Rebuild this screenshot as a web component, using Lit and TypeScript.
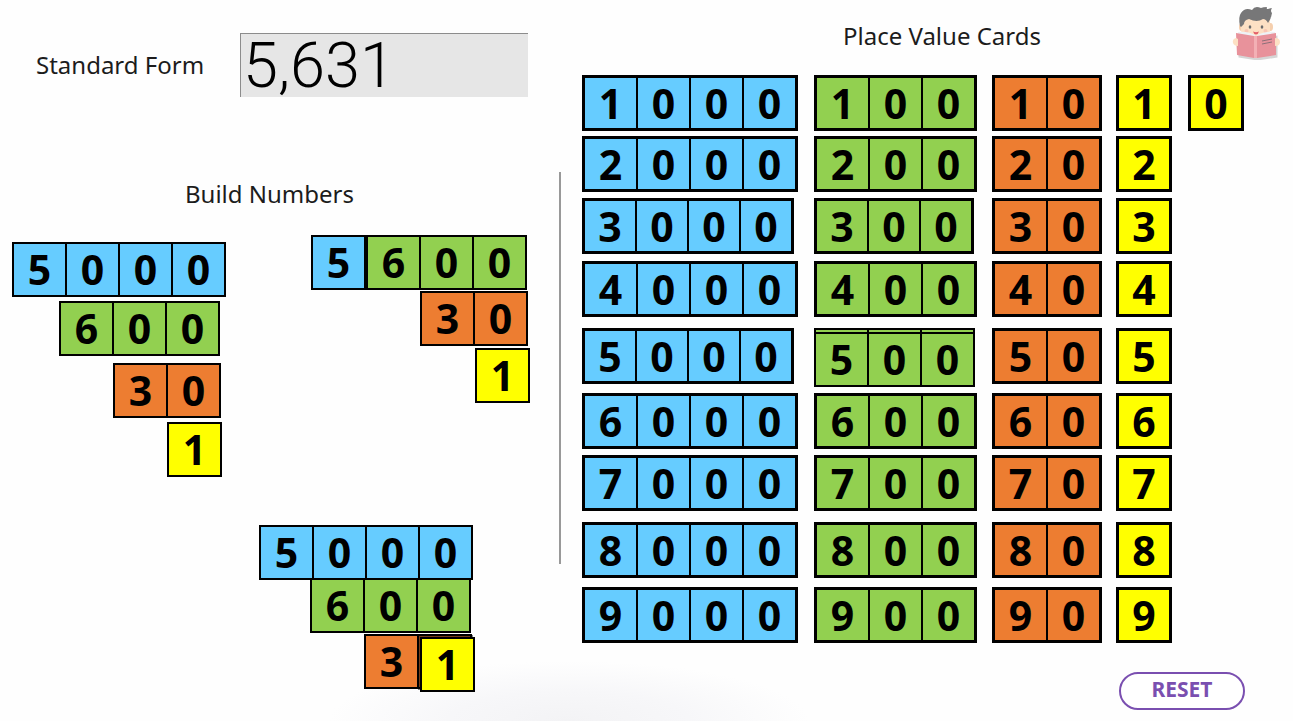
import { LitElement, html, css } from "lit";
import { customElement, property, state } from "lit/decorators.js";
import { classMap } from "lit/directives/class-map.js";
import { styleMap } from "lit/directives/style-map.js";

interface Placed {
  value: string;
  x: number;
  y: number;
  lifted?: boolean;
}

const INITIAL: Placed[] = [
  { value: "5000", x: 12, y: 242 },
  { value: "600", x: 59, y: 301 },
  { value: "30", x: 113, y: 363 },
  { value: "1", x: 167, y: 422 },
  { value: "5000", x: 311, y: 235 },
  { value: "600", x: 366, y: 235 },
  { value: "30", x: 420, y: 291 },
  { value: "1", x: 475, y: 348 },
  { value: "5000", x: 259, y: 525 },
  { value: "600", x: 310, y: 578 },
  { value: "30", x: 364, y: 634 },
  { value: "1", x: 420, y: 637, lifted: true },
];

const TIGHT = new Set(["3000", "5000", "300"]);

@customElement("value-card")
export class ValueCard extends LitElement {
  @property() value = "";
  @property({ reflect: true }) size: "normal" | "tight" | "small" = "normal";
  @property({ type: Boolean }) blank = false;

  static styles = css`
    :host {
      display: inline-block;
      vertical-align: top;
      cursor: grab;
    }
    .card {
      display: flex;
      gap: 2px;
      box-sizing: border-box;
      border: 3px solid #000;
      background: #000;
      width: max-content;
    }
    .cell {
      width: 51px;
      height: 51px;
      line-height: 50px;
      text-align: center;
      font-family: "Open Sans", "Noto Sans", sans-serif;
      font-weight: 700;
      font-size: 41px;
      color: #000;
    }
    .n4 .cell { background: #66ccff; }
    .n3 .cell { background: #92d050; }
    .n2 .cell { background: #ed7d31; }
    .n1 .cell { background: #ffff00; }
    .tight .cell { width: 50px; height: 50px; }
    .normal.n1 .cell { width: 50px; }
    .normal .cell { height: 50px; }
    .small { border-width: 2px; }
  `;

  render() {
    return html`<div
      class=${classMap({ card: true, [`n${this.value.length}`]: true, [this.size]: true })}
    >${[...this.value].map((d) => html`<span class="cell">${this.blank ? "" : d}</span>`)}</div>`;
  }
}

@customElement("app-root")
export class AppRoot extends LitElement {
  @state() private placed: Placed[] = INITIAL;

  static styles = css`
    :host {
      display: block;
      min-height: 100vh;
      font-family: "Noto Sans", "Open Sans", sans-serif;
      font-size: 24px;
      line-height: 32px;
      color: #1c1c1c;
      background: radial-gradient(ellipse 240px 60px at 44% 100vh, #f3f3f5, #f7f7f9 50%, #ffffff00) #fefefe;
    }
    .page {
      display: grid;
      grid-template-columns: 559px 1fr;
      min-height: 100vh;
      position: relative;
    }
    .left {
      display: flex;
      flex-direction: column;
    }
    .form {
      display: flex;
      align-items: center;
      justify-content: space-between;
      padding: 33px 31px 0 36px;
    }
    .form input {
      box-sizing: border-box;
      width: 288px;
      height: 64px;
      padding: 0 2px;
      border: 0 solid #8c8c8c;
      border-width: 1px 0 0 1px;
      border-radius: 0;
      background: #e6e6e6;
      color: #000;
      font-family: Roboto, "Open Sans", sans-serif;
      font-weight: 300;
      font-size: 63px;
      outline: none;
    }
    h2 {
      margin: 0;
      font: inherit;
      text-align: center;
    }
    .left h2 {
      padding-top: 81px;
      padding-right: 20px;
    }
    .placed {
      position: absolute;
    }
    .lifted {
      box-shadow: -2px -2px 0 rgba(0, 0, 0, 0.5);
    }
    .right {
      display: flex;
      flex-direction: column;
      padding: 20px 9px 0 23px;
    }
    .head {
      display: grid;
      grid-template-columns: 1fr auto;
      height: 55px;
    }
    .head h2 {
      padding-left: 70px;
    }
    .reader {
      width: 52px;
      height: 56px;
      margin-top: -16px;
    }
    .board {
      display: grid;
      grid-template-columns: 232px 178px 124px 72px auto;
      grid-template-rows: 61px 62px 63px 67px 65px 62px 67px 65px 57px;
      justify-content: start;
    }
    .zero {
      grid-column: 5;
    }
    .stack {
      display: grid;
      align-content: start;
      justify-items: start;
    }
    .stack > * {
      grid-area: 1 / 1;
    }
    .stack > .front {
      margin-top: 4px;
    }
    .foot {
      display: flex;
      justify-content: flex-end;
      padding: 28px 39px 0 0;
    }
    .reset {
      box-sizing: border-box;
      width: 126px;
      height: 38px;
      padding: 0 0 4px;
      border: 2px solid #7a4fb0;
      border-radius: 19px;
      background: #fff;
      color: #7a4fb0;
      font-family: "Noto Sans", "Open Sans", sans-serif;
      font-weight: 700;
      font-size: 21px;
      line-height: 28px;
      cursor: pointer;
    }
    .rule {
      width: 2px;
      height: 392px;
      background: #999;
      position: absolute;
      left: 559px;
      top: 172px;
    }
  `;

  private reset() {
    this.placed = [];
  }

  private boardCard(value: string) {
    if (value === "500") {
      return html`<div class="stack">
        <value-card value="500" size="small" blank></value-card>
        <value-card class="front" value="500" size="small"></value-card>
      </div>`;
    }
    return html`<div>
      <value-card value=${value} size=${TIGHT.has(value) ? "tight" : "normal"}></value-card>
    </div>`;
  }

  private reader() {
    return html`<svg class="reader" viewBox="0 0 52 56" aria-hidden="true">
      <g transform="translate(1.5 1.5)" fill="#000" opacity="0.16">
        <path d="M4 30 24 33 44 30V52L24 55 5 52Z" />
      </g>
      <ellipse cx="9.500" cy="23" rx="2.500" ry="4" fill="#f5cfae" />
      <ellipse cx="38.500" cy="23" rx="2.500" ry="4" fill="#f5cfae" />
      <path d="M9 14Q10 8 23 8 37 8 38 15V27Q35 36 24 36 12 36 9 27Z" fill="#fde0c4" />
      <path d="M8 22Q6 13 9 9 13 3 20 6 23 1 29 4 31 3 35 3 34 5 36 5 39 4 40 4 38 7 40 9 39 15 36 19 34 15 31 15 25 19 17 15 12 16 12 20L9 23Z" fill="#777778" />
      <ellipse cx="18" cy="23" rx="1.300" ry="1.800" fill="#6a6a6c" />
      <ellipse cx="30" cy="23" rx="1.300" ry="1.800" fill="#6a6a6c" />
      <circle cx="14.500" cy="27" r="2" fill="#fac6b4" />
      <circle cx="33.500" cy="27" r="2" fill="#fac6b4" />
      <path d="M21 27.500Q24 29 27 27.500 26 30.500 24 30.500T21 27.500Z" fill="#e35d68" />
      <path d="M6 28Q17 27 24 32 32 27 43 28V34H6Z" fill="#eef2f5" />
      <path d="M4 29 22 32 25 32 44 29V51L25 54H22L5 51Z" fill="#e8929b" />
      <path d="M22 32 25 32V54H22Z" fill="#f3b0b5" />
      <path d="M30 37 40 35M30 40 40 38" stroke="#8c7078" stroke-width="1" fill="none" />
      <path d="M4 34Q0 35 1 39 2 42 6 42V35Z" fill="#fde0c4" />
      <path d="M43 34Q48 34 48 38 48 42 43 42Z" fill="#fde0c4" />
    </svg>`;
  }

  render() {
    const digits = ["1", "2", "3", "4", "5", "6", "7", "8", "9"];
    return html`
      <main class="page">
        <section class="left">
          <div class="form">
            <label for="standard">Standard Form</label>
            <input id="standard" type="text" value="5,631" autocomplete="off" />
          </div>
          <h2>Build Numbers</h2>
          ${this.placed.map(
            (p) => html`<value-card
              class=${classMap({ placed: true, lifted: !!p.lifted })}
              style=${styleMap({ left: `${p.x}px`, top: `${p.y}px` })}
              value=${p.value}
              size="small"
            ></value-card>`
          )}
        </section>
        <div class="rule"></div>
        <section class="right">
          <div class="head">
            <h2>Place Value Cards</h2>
            ${this.reader()}
          </div>
          <div class="board">
            ${digits.map(
              (d, i) => html`
                ${this.boardCard(d + "000")}${this.boardCard(d + "00")}${this.boardCard(d + "0")}${this.boardCard(d)}
                <div class="zero">${i === 0 ? html`<value-card value="0"></value-card>` : ""}</div>
              `
            )}
          </div>
          <div class="foot">
            <button class="reset" type="button" @click=${this.reset}>RESET</button>
          </div>
        </section>
      </main>
    `;
  }
}
